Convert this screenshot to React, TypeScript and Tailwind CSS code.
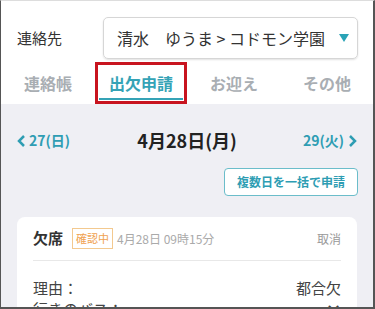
import React from "react";

export default function App() {
  const font = { fontFamily: '"Noto Sans CJK JP", "Noto Sans", sans-serif' };
  return (
    <div
      style={font}
      className="w-[375px] h-[309px] overflow-hidden bg-[#efeff4] border-l border-r-2 border-b-2 border-t border-l-[#555] border-r-[#555] border-b-[#555] border-t-[#ddd] box-border flex flex-col"
    >
      {/* header */}
      <div className="bg-white flex flex-col">
        <div className="flex items-center pt-[16px] pl-[16px] pr-[15px]">
          <div className="w-[86px] text-[15px] text-[#333]">連絡先</div>
          <div className="flex-1 h-[42px] flex items-center justify-between border border-[#d6d6d6] rounded-[5px] shadow-[0_1px_2px_rgba(0,0,0,0.12)] pl-[13px] pr-[8px]">
            <span className="text-[16px] text-[#333] whitespace-pre">清水　ゆうま &gt; コドモン学園</span>
            <svg width="10" height="9" viewBox="0 0 10 9">
              <polygon points="0,0 10,0 5,8" fill="#2aa3b6" />
            </svg>
          </div>
        </div>
        <div className="flex h-[42px] mt-[3px] text-[16px] font-bold text-[#a9aeb3]">
          <div className="w-[94px] flex items-center justify-center">連絡帳</div>
          <div className="relative w-[92px] flex items-center justify-center border-[3px] border-[#c8141f] text-[#35a3b6]">
            出欠申請
            <div className="absolute left-[1px] right-[1px] bottom-[1px] h-[2px] bg-[#35a3b6]" />
          </div>
          <div className="w-[94px] flex items-center justify-center">お迎え</div>
          <div className="flex-1 flex items-center justify-center">その他</div>
        </div>
      </div>

      {/* date nav */}
      <div className="flex items-center justify-between px-[16px] mt-[23px]">
        <div className="w-[80px] flex items-center text-[14px] font-bold text-[#2e9db3]">
          <svg width="9" height="12" viewBox="0 0 9 12" className="mr-[3px]">
            <polyline points="7,1 2,6 7,11" fill="none" stroke="#2e9db3" strokeWidth="2.5" />
          </svg>
          27(日)
        </div>
        <div className="text-[18px] font-bold text-[#222]">4月28日(月)</div>
        <div className="w-[80px] flex items-center justify-end text-[14px] font-bold text-[#2e9db3]">
          29(火)
          <svg width="9" height="12" viewBox="0 0 9 12" className="ml-[4px]">
            <polyline points="2,1 7,6 2,11" fill="none" stroke="#2e9db3" strokeWidth="2.5" />
          </svg>
        </div>
      </div>

      <div className="flex justify-end pr-[15px] mt-[14px]">
        <div className="h-[28px] px-[12px] flex items-center bg-white border border-[#6bbdca] rounded-[4px] text-[12px] font-bold text-[#2e9db3]">
          複数日を一括で申請
        </div>
      </div>

      {/* card */}
      <div className="mx-[16px] mt-[21px] bg-white rounded-[8px] px-[16px] flex-1">
        <div className="flex items-center h-[44px] border-b border-[#e8e8e8]">
          <span className="text-[15px] font-bold text-[#333]">欠席</span>
          <span className="ml-[9px] h-[21px] px-[3px] flex items-center border border-[#f3c98f] text-[11px] text-[#f0a250]">確認中</span>
          <span className="ml-[4px] text-[12px] text-[#aaa]">4月28日 09時15分</span>
          <span className="ml-auto text-[12px] text-[#999]">取消</span>
        </div>
        <div className="flex justify-between mt-[16px] text-[15px] text-[#444] leading-[22px]">
          <span>理由：</span>
          <span>都合欠</span>
        </div>
        <div className="flex justify-between text-[15px] text-[#444] leading-[20px]">
          <span>行きのバス：</span>
          <span className="text-[18px]">✕</span>
        </div>
      </div>
    </div>
  );
}
